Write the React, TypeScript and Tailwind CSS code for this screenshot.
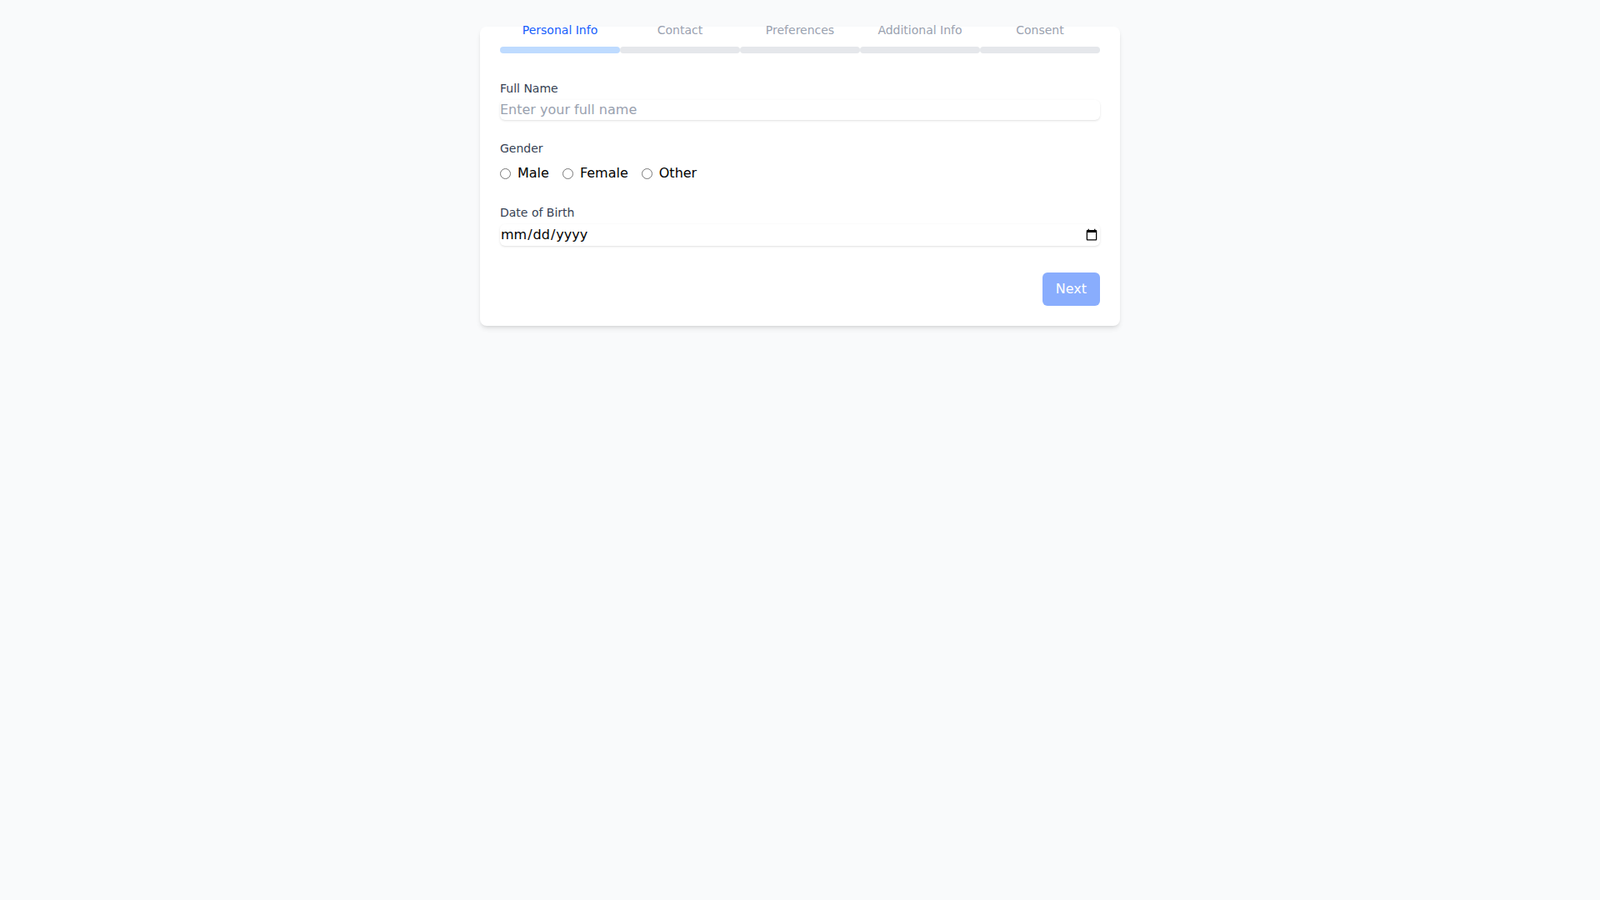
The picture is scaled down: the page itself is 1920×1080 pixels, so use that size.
import { useState } from "react";

const steps = ["Personal Info", "Contact", "Preferences", "Additional Info", "Consent"];

function StepBar({ current }: { current: number }) {
  return (
    <div className="flex mb-8">
      {steps.map((label, i) => (
        <div key={label} className="relative flex-1">
          <span
            className={
              i === current
                ? "absolute -top-[30px] left-0 right-0 text-center text-sm leading-5 text-blue-600"
                : "absolute -top-[30px] left-0 right-0 text-center text-sm leading-5 text-gray-400"
            }
          >
            {label}
          </span>
          <div className={i <= current ? "h-2 rounded-full bg-blue-200" : "h-2 rounded-full bg-gray-200"} />
        </div>
      ))}
    </div>
  );
}

export default function App() {
  const [name, setName] = useState("");
  const [gender, setGender] = useState("");
  const [dob, setDob] = useState("");
  const canGo = name.trim() !== "" && gender !== "" && dob !== "";

  return (
    <div className="min-h-screen bg-gray-50 pt-8 font-['DejaVu_Sans',sans-serif]">
      <div className="mx-auto max-w-3xl rounded-lg bg-white p-6 shadow-md">
        <StepBar current={0} />

        <div className="space-y-6">
          <div>
            <label className="mb-1 block text-sm text-gray-700">Full Name</label>
            <input
              type="text"
              value={name}
              onChange={(e) => setName(e.target.value)}
              placeholder="Enter your full name"
              className="block w-full rounded-md text-base text-black shadow-sm outline-none placeholder:text-gray-400"
            />
          </div>

          <div>
            <label className="mb-2 block text-sm text-gray-700">Gender</label>
            <div className="flex items-center gap-4 pb-px text-base text-black">
              {["Male", "Female", "Other"].map((g) => (
                <label key={g} className="flex items-center">
                  <input
                    type="radio"
                    name="gender"
                    value={g}
                    checked={gender === g}
                    onChange={() => setGender(g)}
                  />
                  <span className="ml-2">{g}</span>
                </label>
              ))}
            </div>
          </div>

          <div>
            <label className="mb-1 block text-sm text-gray-700">Date of Birth</label>
            <input
              type="date"
              value={dob}
              onChange={(e) => setDob(e.target.value)}
              className="block w-full rounded-md py-px text-base text-black shadow-sm outline-none"
            />
          </div>
        </div>

        <div className="mt-8 flex justify-end">
          <button
            disabled={!canGo}
            className="rounded-md bg-blue-600 px-4 py-2 text-base text-white disabled:opacity-50"
          >
            Next
          </button>
        </div>
      </div>
    </div>
  );
}
